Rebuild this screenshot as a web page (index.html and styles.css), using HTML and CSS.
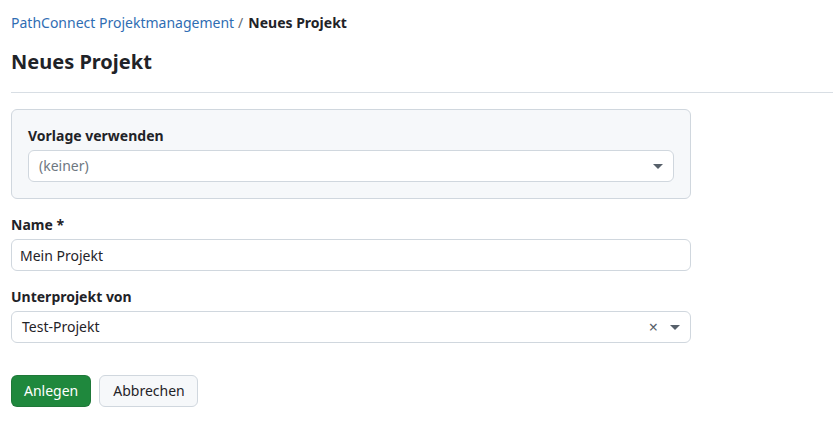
FILE: index.html
```html
<!DOCTYPE html>
<html lang="de">
<head>
<meta charset="utf-8">
<title>Neues Projekt</title>
<link rel="stylesheet" href="styles.css">
</head>
<body>
<main class="page">
  <nav class="breadcrumb">
    <a href="#" class="crumb-link">PathConnect Projektmanagement</a>
    <span class="crumb-sep">/</span>
    <span class="crumb-current">Neues Projekt</span>
  </nav>
  <h1 class="title">Neues Projekt</h1>
  <hr class="divider">
  <form class="form">
    <div class="template-box">
      <label class="label">Vorlage verwenden</label>
      <div class="select select-inner">
        <span class="select-text placeholder">(keiner)</span>
        <span class="caret"></span>
      </div>
    </div>
    <div class="group">
      <label class="label">Name *</label>
      <input class="input" type="text" value="Mein Projekt">
    </div>
    <div class="group">
      <label class="label">Unterprojekt von</label>
      <div class="select">
        <span class="select-text">Test-Projekt</span>
        <span class="clear">×</span>
        <span class="caret"></span>
      </div>
    </div>
    <div class="actions">
      <button type="button" class="btn btn-primary">Anlegen</button>
      <button type="button" class="btn btn-default">Abbrechen</button>
    </div>
  </form>
</main>
</body>
</html>
```

FILE: styles.css
```css
* { box-sizing: border-box; }
html, body {
  margin: 0;
  background: #ffffff;
}
body {
  font-family: "Noto Sans", "Open Sans", sans-serif;
  font-size: 14px;
  line-height: 20px;
  color: #1f2328;
}
.page {
  padding: 13px 0 0 11px;
}
.breadcrumb {
  display: flex;
  align-items: baseline;
  font-size: 14px;
  line-height: 20px;
}
.crumb-link {
  color: #2f6db3;
  text-decoration: none;
}
.crumb-sep {
  color: #656d76;
  margin: 0 5px 0 4px;
}
.crumb-current { font-weight: 700; color: #1f2328; }
.title {
  margin: 15px 0 0 0;
  font-size: 20px;
  line-height: 28px;
  font-weight: 700;
}
.divider {
  margin: 16px 0 16px 0;
  border: 0;
  border-top: 1px solid #d8dee4;
  height: 0;
}
.form {
  width: 680px;
  display: flex;
  flex-direction: column;
}
.template-box {
  background: #f6f8fa;
  border: 1px solid #d0d7de;
  border-radius: 6px;
  padding: 16px 16px 16px 16px;
}
.label {
  display: block;
  font-weight: 700;
  margin-bottom: 4px;
}
.group { margin-top: 16px; }
.input,
.select {
  width: 100%;
  height: 32px;
  border: 1px solid #d0d7de;
  border-radius: 6px;
  background: #ffffff;
  font-family: inherit;
  font-size: 14px;
  color: #1f2328;
}
.input {
  display: block;
  padding: 0 8px;
  outline: none;
}
.select {
  display: flex;
  align-items: center;
  padding: 0 10px 0 10px;
}
.select-text { flex: 1; }
.placeholder { color: #6e7781; }
.clear {
  color: #57606a;
  font-size: 16px;
  margin-right: 12px;
  line-height: 1;
}
.caret {
  width: 0;
  height: 0;
  border-left: 5px solid transparent;
  border-right: 5px solid transparent;
  border-top: 5px solid #57606a;
}
.actions {
  display: flex;
  gap: 8px;
  margin-top: 32px;
}
.btn {
  height: 32px;
  padding: 0 12px;
  border-radius: 6px;
  font-family: inherit;
  font-size: 14px;
  line-height: 20px;
  cursor: pointer;
}
.btn-primary {
  background: #1f883d;
  border: 1px solid rgba(31, 35, 40, 0.15);
  color: #ffffff;
}
.btn-default {
  background: #f6f8fa;
  border: 1px solid #d0d7de;
  color: #1f2328;
  padding: 0 12px 0 13px;
}
```
